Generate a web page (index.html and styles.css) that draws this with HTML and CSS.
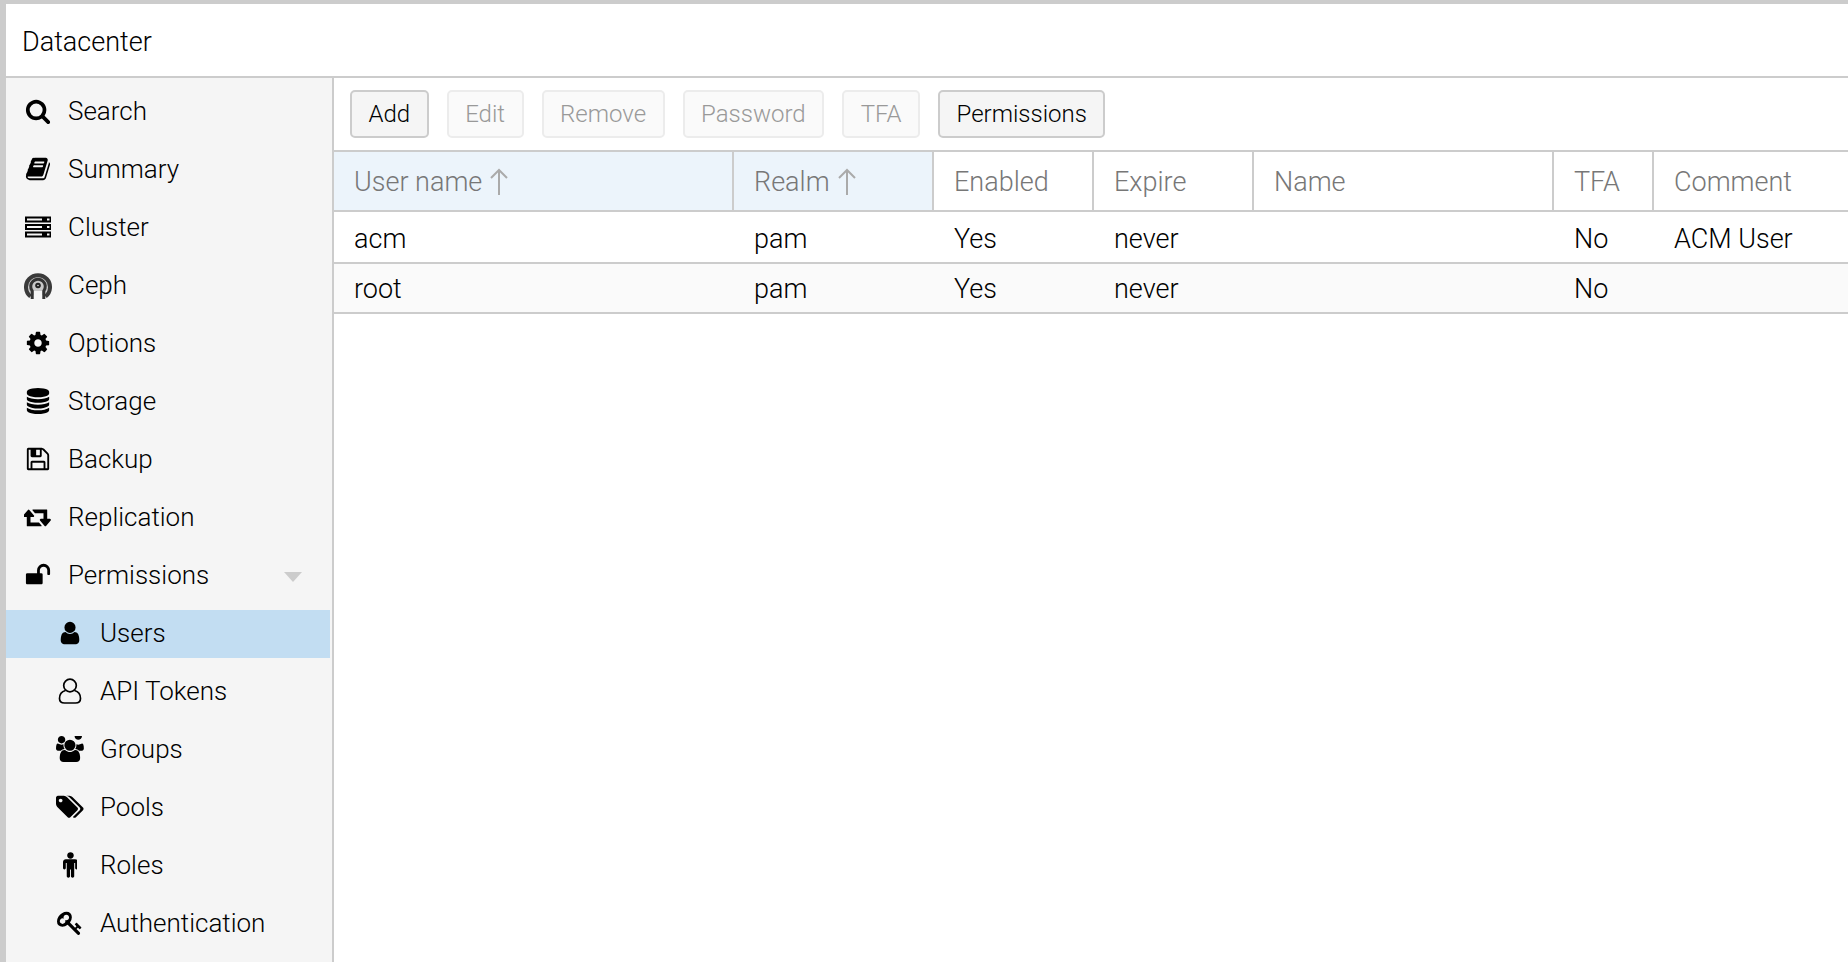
FILE: index.html
```html
<!DOCTYPE html>
<html lang="en">
<head>
<meta charset="utf-8">
<title>Datacenter - Users</title>
<link rel="stylesheet" href="styles.css">
</head>
<body>
<div class="app">
  <header class="title">Datacenter</header>
  <div class="main">
    <nav class="side">
      <a class="item"><span class="ico"><svg viewBox="0 0 1792 1792"><path d="M1216 832q0-185-131.500-316.500t-316.500-131.500-316.500 131.500-131.500 316.500 131.500 316.500 316.500 131.500 316.500-131.500 131.500-316.500zm512 832q0 52-38 90t-90 38q-54 0-90-38l-343-342q-179 124-399 124-143 0-273.500-55.500t-225-150-150-225-55.500-273.500 55.500-273.500 150-225 225-150 273.500-55.500 273.500 55.500 225 150 150 225 55.500 273.500q0 220-124 399l343 343q37 37 37 90z"/></svg></span>Search</a>
      <a class="item"><span class="ico"><svg viewBox="0 0 1792 1792"><path d="M1703 478q40 57 18 129l-275 906q-19 64-76.500 107.500t-122.500 43.500h-923q-77 0-148.500-53.500t-99.500-131.500q-24-67-2-127 0-4 3-27t4-37q1-8-3-21.500t-3-19.500q2-11 8-21t16.500-23.500 16.500-23.500q23-38 45-91.500t30-91.500q3-10 .5-30t-.5-28q3-11 17-28t17-23q21-36 42-92t25-90q1-9-2.500-32t.5-28q4-13 22-30.500t22-22.500q19-26 42.500-84.500t27.500-96.500q1-8-3-25.500t-2-26.500q2-8 9-18t18-23 17-21q8-12 16.500-30.500t15-35 16-36 19.500-32 26.500-23.500 36-11.500 47.500 5.500l-1 3q38-9 51-9h761q74 0 114 56t18 130l-274 906q-36 119-71.500 153.500t-128.500 34.500h-869q-27 0-38 15-11 16-1 43 24 70 144 70h923q29 0 56-15.500t35-41.500l300-987q7-22 5-57 38 15 59 43zm-1064 2q-4 13 2 22.500t20 9.500h608q13 0 25.500-9.500t16.500-22.500l21-64q4-13-2-22.500t-20-9.500h-608q-13 0-25.500 9.500t-16.500 22.500zm-83 256q-4 13 2 22.500t20 9.500h608q13 0 25.500-9.500t16.500-22.500l21-64q4-13-2-22.500t-20-9.500h-608q-13 0-25.500 9.500t-16.500 22.500z"/></svg></span>Summary</a>
      <a class="item"><span class="ico"><svg viewBox="0 0 26 26"><path fill-rule="evenodd" d="M0 2.500h26v6H0zM2 4.500h15v2H2zM22 4.500h2.500v2H22zM0 10h26v6H0zM2 12h15v2H2zM22 12h2.500v2H22zM0 17.500h26v6H0zM2 19.500h15v2H2zM22 19.500h2.500v2H22z"/></svg></span>Cluster</a>
      <a class="item"><span class="ico"><svg class="ceph" viewBox="0 0 28 28"><circle cx="14" cy="14" r="11" fill="#c8c8c8"/><g fill="none"><path d="M6.500 25.500A12 12 0 1 1 21.500 25.500" stroke="#3a3a3a" stroke-width="4"/><path d="M8.200 28V20A7.300 7.300 0 1 1 19.800 20V28" stroke="#333" stroke-width="3"/></g><rect x="10" y="20" width="8" height="8" fill="#f5f5f5"/><circle cx="14" cy="14.500" r="2.800" fill="#222"/><circle cx="14" cy="14.500" r=".8" fill="#ddd"/></svg></span>Ceph</a>
      <a class="item"><span class="ico"><svg viewBox="0 0 1792 1792"><path d="M1152 896q0-106-75-181t-181-75-181 75-75 181 75 181 181 75 181-75 75-181zm512-109v222q0 12-8 23t-20 13l-185 28q-19 54-39 91 35 50 107 138 10 12 10 25t-9 23q-27 37-99 108t-94 71q-12 0-26-9l-138-108q-44 23-91 38-16 136-29 186-7 28-36 28h-222q-14 0-24.500-8.500t-11.500-21.500l-28-184q-49-16-90-37l-141 107q-10 9-25 9-14 0-25-11-126-114-165-168-7-10-7-23 0-12 8-23 15-21 51-66.500t54-70.500q-27-50-41-99l-183-27q-13-2-21-12.500t-8-23.500v-222q0-12 8-23t19-13l186-28q14-46 39-92-40-57-107-138-10-12-10-24 0-10 9-23 26-36 98.500-107.500t94.500-71.500q13 0 26 10l138 107q44-23 91-38 16-136 29-186 7-28 36-28h222q14 0 24.500 8.500t11.500 21.500l28 184q49 16 90 37l142-107q9-9 24-9 13 0 25 10 129 119 165 170 7 8 7 22 0 12-8 23-15 21-51 66.500t-54 70.500q26 50 41 98l183 28q13 2 21 12.500t8 23.500z"/></svg></span>Options</a>
      <a class="item"><span class="ico"><svg viewBox="0 0 1792 1792"><path d="M896 768q237 0 443-43t325-127v170q0 69-103 128t-280 93.500-385 34.500-385-34.500-280-93.500-103-128v-170q119 84 325 127t443 43zm0 768q237 0 443-43t325-127v170q0 69-103 128t-280 93.500-385 34.500-385-34.500-280-93.500-103-128v-170q119 84 325 127t443 43zm0-384q237 0 443-43t325-127v170q0 69-103 128t-280 93.500-385 34.500-385-34.500-280-93.500-103-128v-170q119 84 325 127t443 43zm0-1152q208 0 385 34.500t280 93.500 103 128v128q0 69-103 128t-280 93.500-385 34.500-385-34.500-280-93.500-103-128v-128q0-69 103-128t280-93.500 385-34.500z"/></svg></span>Storage</a>
      <a class="item"><span class="ico"><svg viewBox="0 0 1792 1792"><path d="M512 1536h768v-384h-768v384zm896 0h128v-896q0-14-10-38.500t-20-34.500l-281-281q-10-10-34-20t-39-10v416q0 40-28 68t-68 28h-576q-40 0-68-28t-28-68v-416h-128v1280h128v-416q0-40 28-68t68-28h832q40 0 68 28t28 68v416zm-384-928v-320q0-13-9.500-22.500t-22.500-9.500h-192q-13 0-22.500 9.500t-9.500 22.500v320q0 13 9.500 22.500t22.500 9.500h192q13 0 22.500-9.500t9.500-22.500zm640 32v928q0 40-28 68t-68 28h-1344q-40 0-68-28t-28-68v-1344q0-40 28-68t68-28h928q40 0 88 20t76 48l280 280q28 28 48 76t20 88z"/></svg></span>Backup</a>
      <a class="item"><span class="ico"><svg viewBox="0 0 1920 1792"><path d="M1216 1504q0 13-9.500 22.500t-22.500 9.500h-960q-8 0-13.500-2t-9-7-5.500-8-3-11.500-1-11.500v-600h-192q-26 0-45-19t-19-45q0-24 15-41l320-384q19-22 49-22t49 22l320 384q15 17 15 41 0 26-19 45t-45 19h-192v384h576q16 0 25 11l160 192q7 10 7 21zm640-416q0 24-15 41l-320 384q-20 23-49 23t-49-23l-320-384q-15-17-15-41 0-26 19-45t45-19h192v-384h-576q-16 0-25-12l-160-192q-7-9-7-20 0-13 9.500-22.500t22.500-9.500h960q8 0 13.500 2t9 7 5.500 8 3 11.500 1 11.500v600h192q26 0 45 19t19 45z"/></svg></span>Replication</a>
      <a class="item"><span class="ico"><svg viewBox="0 0 1792 1792"><path d="M1728 576v256q0 26-19 45t-45 19h-64q-26 0-45-19t-19-45v-256q0-106-75-181t-181-75-181 75-75 181v192h96q40 0 68 28t28 68v576q0 40-28 68t-68 28h-960q-40 0-68-28t-28-68v-576q0-40 28-68t68-28h672v-192q0-185 131.500-316.500t316.500-131.500 316.500 131.500 131.500 316.500z"/></svg></span>Permissions<span class="caret"></span></a>
      <a class="item child selected"><span class="ico"><svg viewBox="0 0 1792 1792"><path d="M1536 1399q0 109-62.500 187t-150.500 78h-854q-88 0-150.500-78t-62.500-187q0-85 8.500-160.500t31.500-152 58.500-131 94-89 134.500-34.500q131 128 313 128t313-128q76 0 134.500 34.500t94 89 58.500 131 31.500 152 8.500 160.500zm-256-887q0 159-112.500 271.500t-271.500 112.500-271.500-112.500-112.500-271.500 112.500-271.500 271.500-112.500 271.500 112.500 112.500 271.500z"/></svg></span>Users</a>
      <a class="item child"><span class="ico"><svg viewBox="0 0 26 26"><g fill="none" stroke="#000" stroke-width="1.700"><circle cx="13" cy="7.500" r="6.300"/><path d="M8.500 12.500C4.500 13.500 2.500 17 2.500 20.500C2.500 23.200 4.500 25 7.500 25H18.500C21.500 25 23.500 23.200 23.500 20.500C23.500 17 21.500 13.500 17.500 12.500"/></g></svg></span>API Tokens</a>
      <a class="item child"><span class="ico"><svg viewBox="0 0 1920 1792"><path d="M593 896q-162 5-265 128h-134q-82 0-138-40.500t-56-118.500q0-353 124-353 6 0 43.500 21t97.500 42.500 119 21.500q67 0 133-23-5 37-5 66 0 139 81 256zm1071 637q0 120-73 189.500t-194 69.500h-874q-121 0-194-69.500t-73-189.500q0-53 3.500-103.500t14-109 26.500-108.500 43-97.500 62-81 85.500-53.500 111.500-20q10 0 43 21.500t73 48 107 48 135 21.500 135-21.500 107-48 73-48 43-21.500q61 0 111.500 20t85.500 53.500 62 81 43 97.500 26.500 108.500 14 109 3.500 103.500zm-1024-1277q0 106-75 181t-181 75-181-75-75-181 75-181 181-75 181 75 75 181zm704 384q0 159-112.500 271.500t-271.500 112.500-271.500-112.500-112.500-271.500 112.500-271.500 271.500-112.500 271.500 112.500 112.500 271.500zm576 225q0 78-56 118.500t-138 40.500h-134q-103-123-265-128 81-117 81-256 0-29-5-66 66 23 133 23 59 0 119-21.500t97.500-42.500 43.500-21q124 0 124 353zm-128-865q0 106-75 181t-181 75-181-75-75-181 75-181 181-75 181 75 75 181z"/></svg></span>Groups</a>
      <a class="item child"><span class="ico"><svg viewBox="0 0 1920 1792"><path d="M448 448q0-53-37.500-90.500t-90.500-37.500-90.500 37.500-37.500 90.500 37.500 90.500 90.500 37.500 90.500-37.500 37.500-90.500zm1067 576q0 53-37 90l-491 492q-39 37-91 37-53 0-90-37l-715-716q-38-37-64.500-101t-26.500-117v-416q0-52 38-90t90-38h416q53 0 117 26.500t102 64.500l715 714q37 39 37 91zm384 0q0 53-37 90l-491 492q-39 37-91 37-36 0-59-14t-53-45l470-470q37-37 37-90 0-52-37-91l-715-714q-38-38-102-64.500t-117-26.500h224q53 0 117 26.500t102 64.500l715 714q37 39 37 91z"/></svg></span>Pools</a>
      <a class="item child"><span class="ico"><svg viewBox="0 150 1024 1780"><path d="M1024 832v416q0 40-28 68t-68 28-68-28-28-68v-352h-64v912q0 46-33 79t-79 33-79-33-33-79v-464h-64v464q0 46-33 79t-79 33-79-33-33-79v-912h-64v352q0 40-28 68t-68 28-68-28-28-68v-416q0-80 56-136t136-56h640q80 0 136 56t56 136zm-288-448q0 93-65.500 158.500t-158.500 65.500-158.500-65.500-65.500-158.500 65.500-158.500 158.500-65.500 158.500 65.500 65.500 158.500z"/></svg></span>Roles</a>
      <a class="item child"><span class="ico"><svg viewBox="0 0 1792 1792"><path d="M832 512q0-80-56-136t-136-56-136 56-56 136q0 42 19 83-41-19-83-19-80 0-136 56t-56 136 56 136 136 56 136-56 56-136q0-42-19-83 41 19 83 19 80 0 136-56t56-136zm851 704q0 17-49 66t-66 49q-9 0-28.500-16t-36.500-33-38.500-40-24.500-26l-96 96 220 220q28 28 28 68 0 42-39 81t-81 39q-40 0-68-28l-671-671q-176 131-365 131-163 0-265.500-102.500t-102.500-265.500q0-160 95-313t248-248 313-95q163 0 265.500 102.500t102.500 265.500q0 189-131 365l355 355 96-96q-2-2-26-24.500t-40-38.500-33-36.500-16-28.500q0-17 49-66t66-49q13 0 23 10 6 6 46 44.500t82 79.500 86.500 86 73 78 28.500 41z"/></svg></span>Authentication</a>
    </nav>
    <section class="panel">
      <div class="toolbar">
        <button class="btn">Add</button>
        <button class="btn off">Edit</button>
        <button class="btn off">Remove</button>
        <button class="btn off">Password</button>
        <button class="btn off">TFA</button>
        <button class="btn">Permissions</button>
      </div>
      <div class="row head">
        <div class="cell sorted">User name<svg class="arrow" viewBox="0 0 20 28"><path d="M10 27V2M2 10L10 2L18 10"/></svg></div>
        <div class="cell sorted">Realm<svg class="arrow" viewBox="0 0 20 28"><path d="M10 27V2M2 10L10 2L18 10"/></svg></div>
        <div class="cell">Enabled</div>
        <div class="cell">Expire</div>
        <div class="cell">Name</div>
        <div class="cell">TFA</div>
        <div class="cell">Comment</div>
      </div>
      <div class="row body">
        <div class="cell">acm</div><div class="cell">pam</div><div class="cell">Yes</div><div class="cell">never</div><div class="cell"></div><div class="cell">No</div><div class="cell">ACM User</div>
      </div>
      <div class="row body alt">
        <div class="cell">root</div><div class="cell">pam</div><div class="cell">Yes</div><div class="cell">never</div><div class="cell"></div><div class="cell">No</div><div class="cell"></div>
      </div>
    </section>
  </div>
</div>
</body>
</html>
```
FILE: styles.css
```css
* { box-sizing: border-box; }
html, body { margin: 0; height: 100%; overflow: hidden; }
body {
  font-family: Roboto, "Liberation Sans", sans-serif;
  font-weight: 300;
  font-size: 27px;
  color: #000;
  background: #fff;
}
.app {
  height: 962px;
  display: flex;
  flex-direction: column;
  border-top: 4px solid #ccc;
  border-left: 6px solid #ccc;
}
.title {
  height: 74px;
  flex: none;
  display: flex;
  align-items: center;
  padding: 4px 0 0 16px;
  border-bottom: 2px solid #ccc;
}
.main { flex: 1; display: flex; min-height: 0; }
.side {
  width: 328px;
  flex: none;
  background: #f5f5f5;
  border-right: 2px solid #ccc;
  padding: 10px 2px 0 0;
  display: flex;
  flex-direction: column;
  gap: 10px;
  font-size: 26px;
}
.item {
  height: 48px;
  flex: none;
  display: flex;
  align-items: center;
  padding: 0 0 2px 16px;
  position: relative;
}
.item.child { padding-left: 48px; }
.item.selected { background: #c2ddf2; }
.ico {
  width: 32px;
  height: 28px;
  margin-right: 14px;
  flex: none;
  display: flex;
  align-items: center;
  justify-content: center;
}
.ico svg { height: 26px; max-width: 30px; fill: #000; }
.ico svg.ceph { height: 28px; filter: blur(0.5px); }
.caret {
  position: absolute;
  left: 278px;
  top: 20px;
  border-style: solid;
  border-width: 10px 9.500px 0;
  border-color: #ccc transparent transparent;
}
.panel { flex: 1; min-width: 0; }
.toolbar {
  height: 72px;
  display: flex;
  align-items: center;
  gap: 18px;
  padding-left: 16px;
}
.btn {
  height: 48px;
  padding: 0 16.500px;
  font: inherit;
  font-size: 24px;
  color: #000;
  background: #f5f5f5;
  border: 2px solid #ccc;
  border-radius: 5px;
}
.btn.off {
  color: #999;
  background: #fafafa;
  border-color: #ececec;
}
.row {
  display: grid;
  grid-template-columns: 400px 200px 160px 160px 300px 100px 1fr;
}
.head {
  height: 62px;
  border-top: 2px solid #ccc;
  border-bottom: 2px solid #ccc;
  color: #777;
}
.head .cell { padding-top: 2px; border-right: 2px solid #ccc; }
.head .cell:last-child { border-right: 0; }
.sorted { background: #ecf4fb; }
.cell {
  display: flex;
  align-items: center;
  padding-left: 20px;
  white-space: nowrap;
}
.arrow {
  width: 20px;
  height: 28px;
  margin-left: 7px;
  fill: none;
  stroke: #aaa;
  stroke-width: 2;
}
.body { height: 52px; padding-top: 4px; border-bottom: 2px solid #ccc; }
.alt { height: 50px; padding-top: 2px; background: #fafafa; }
```
